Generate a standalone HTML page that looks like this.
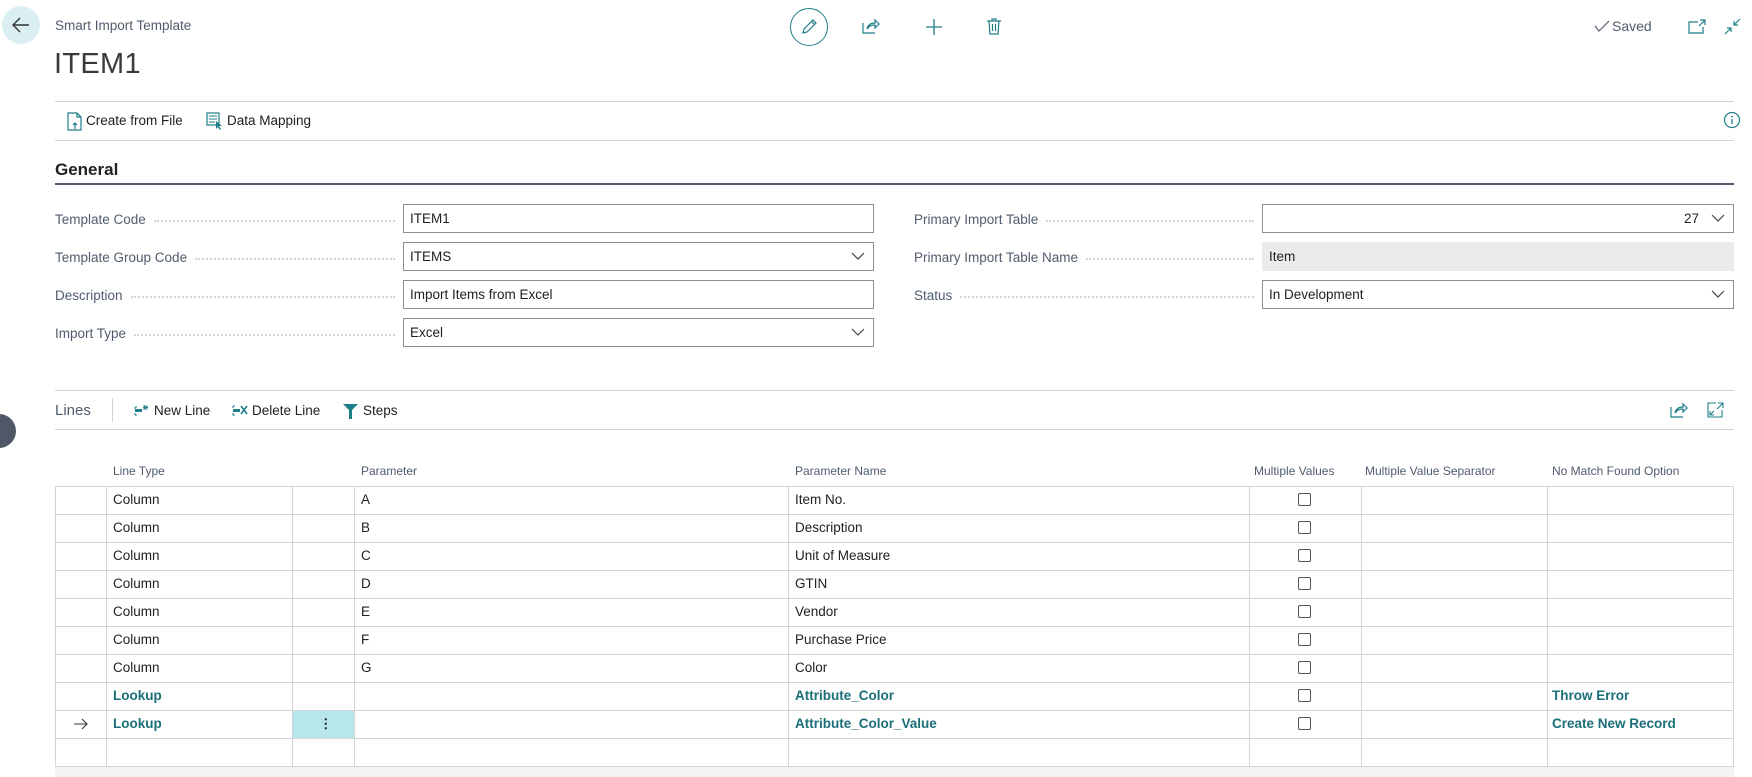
<!DOCTYPE html>
<html><head><meta charset="utf-8"><style>
*{box-sizing:border-box;margin:0;padding:0}
body{width:1752px;height:777px;background:#fff;font-family:"Segoe UI","Liberation Sans",sans-serif;color:#212121;position:relative;overflow:hidden;font-size:14px}
.a{position:absolute;white-space:nowrap}
.hl{position:absolute;height:1px;background:#d4d4d4}
.lbl{position:absolute;display:flex;align-items:center;height:29px;color:#505c6d;font-size:13.5px;padding-top:2px}
.lbl span.d{flex:1;margin-left:8px;margin-right:8px;border-bottom:2px dotted #d6d6d6;height:1px;margin-top:2px}
.box{position:absolute;height:29px;border:1px solid #8a8d94;padding-left:6px;line-height:27px;font-size:13.5px;color:#212121}
.chev{position:absolute;right:8px;top:8px}
.cell{position:absolute;font-size:13.5px;line-height:28px}
.th{position:absolute;font-size:12px;color:#505c6d;top:464px}
.vl{position:absolute;width:1px;background:#d4d4d8;top:486px;height:280px}
.rl{position:absolute;height:1px;background:#d4d4d8;left:55px;width:1679px}
.cb{position:absolute;width:13px;height:13px;border:1px solid #555;border-radius:2px;left:1298px}
.lk{color:#1a6f78;font-weight:bold}
</style></head><body>
<div class="a" style="left:2px;top:6px;width:38px;height:38px;border-radius:50%;background:#dbeef2"></div>
<svg class="a" style="left:10px;top:15px" width="22" height="20" viewBox="0 0 22 20"><path d="M19 10H3M10 3L3 10l7 7" fill="none" stroke="#333" stroke-width="1.4"/></svg>
<div class="a" style="left:55px;top:18px;font-size:13.5px;color:#505c6d">Smart Import Template</div>
<div class="a" style="left:54px;top:48px;font-size:29px;font-weight:300;color:#3a3a3a;letter-spacing:0.3px">ITEM1</div>
<div class="a" style="left:790px;top:8px;width:38px;height:38px;border-radius:50%;border:1.5px solid #1f7e88"></div>
<svg class="a" style="left:800px;top:17px" width="19" height="19" viewBox="0 0 19 19"><path d="M3 16l1-4L13 3l3 3-9 9z M11.5 4.5l3 3" fill="none" stroke="#1f7e88" stroke-width="1.2"/></svg>
<svg class="a" style="left:862px;top:18px" width="18" height="16" viewBox="0 0 18 16"><path d="M1 5v10h12 M5 11c1-4 4-6 8-6V2l4 4-4 4V7c-3 0-6 1-8 4" fill="none" stroke="#1f7e88" stroke-width="1.2"/></svg>
<svg class="a" style="left:925px;top:18px" width="18" height="18" viewBox="0 0 18 18"><path d="M9 1v16M1 9h16" stroke="#1f7e88" stroke-width="1.3"/></svg>
<svg class="a" style="left:986px;top:17px" width="16" height="18" viewBox="0 0 16 18"><path d="M1 4h14M6 4V2h4v2M3 4l1 13h8l1-13M6.5 7v7M9.5 7v7" fill="none" stroke="#1f7e88" stroke-width="1.2"/></svg>
<svg class="a" style="left:1594px;top:20px" width="16" height="12" viewBox="0 0 16 12"><path d="M1 6l4 5L15 1" fill="none" stroke="#505c6d" stroke-width="1.2"/></svg>
<div class="a" style="left:1612px;top:18px;font-size:14px;color:#505c6d">Saved</div>
<svg class="a" style="left:1688px;top:19px" width="18" height="15" viewBox="0 0 18 15"><path d="M10 3H1v11h14V8 M12 1h5v5 M17 1l-6 6" fill="none" stroke="#1f7e88" stroke-width="1.2"/></svg>
<svg class="a" style="left:1724px;top:18px" width="17" height="17" viewBox="0 0 17 17"><path d="M16 1l-6 6M10 3v4h4 M1 16l6-6M3 10h4v4" fill="none" stroke="#1f7e88" stroke-width="1.2"/></svg>
<div class="hl" style="left:55px;top:101px;width:1679px"></div>
<svg class="a" style="left:67px;top:112px" width="16" height="19" viewBox="0 0 16 19"><path d="M10 1H1v17h13V5z M10 1v4h4 M8 17v-6M6 13l2-2 2 2" fill="none" stroke="#1f7e88" stroke-width="1.2"/></svg>
<div class="a" style="left:86px;top:113px;font-size:13.5px">Create from File</div>
<svg class="a" style="left:206px;top:112px" width="18" height="18" viewBox="0 0 18 18"><rect x="1" y="1" width="12" height="12" fill="none" stroke="#1f7e88" stroke-width="1.2"/><path d="M3 4h8M3 7h8M3 10h6" stroke="#1f7e88"/><path d="M10 9l6 5-3 0 2 3-1 1-2-3-2 2z" fill="#1f7e88"/></svg>
<div class="a" style="left:227px;top:113px;font-size:13.5px">Data Mapping</div>
<svg class="a" style="left:1723px;top:111px" width="18" height="18" viewBox="0 0 18 18"><circle cx="9" cy="9" r="7.5" fill="none" stroke="#1f7e88" stroke-width="1.2"/><path d="M9 8v5" stroke="#1f7e88" stroke-width="1.3"/><circle cx="9" cy="5.5" r="0.9" fill="#1f7e88"/></svg>
<div class="hl" style="left:55px;top:140px;width:1679px"></div>
<div class="a" style="left:55px;top:160px;font-size:17px;font-weight:600;color:#212121">General</div>
<div class="a" style="left:55px;top:183px;width:1679px;height:2px;background:#505c6d"></div>
<div class="lbl" style="left:55px;top:204px;width:348px">Template Code<span class="d"></span></div>
<div class="lbl" style="left:55px;top:242px;width:348px">Template Group Code<span class="d"></span></div>
<div class="lbl" style="left:55px;top:280px;width:348px">Description<span class="d"></span></div>
<div class="lbl" style="left:55px;top:318px;width:348px">Import Type<span class="d"></span></div>
<div class="box" style="left:403px;top:204px;width:471px">ITEM1</div>
<div class="box" style="left:403px;top:242px;width:471px">ITEMS<svg class="chev" width="14" height="10" viewBox="0 0 14 10"><path d="M1 2l6 6 6-6" fill="none" stroke="#444" stroke-width="1.2"/></svg></div>
<div class="box" style="left:403px;top:280px;width:471px">Import Items from Excel</div>
<div class="box" style="left:403px;top:318px;width:471px">Excel<svg class="chev" width="14" height="10" viewBox="0 0 14 10"><path d="M1 2l6 6 6-6" fill="none" stroke="#444" stroke-width="1.2"/></svg></div>
<div class="lbl" style="left:914px;top:204px;width:348px">Primary Import Table<span class="d"></span></div>
<div class="lbl" style="left:914px;top:242px;width:348px">Primary Import Table Name<span class="d"></span></div>
<div class="lbl" style="left:914px;top:280px;width:348px">Status<span class="d"></span></div>
<div class="box" style="left:1262px;top:204px;width:472px;text-align:right;padding-right:34px">27<svg class="chev" width="14" height="10" viewBox="0 0 14 10"><path d="M1 2l6 6 6-6" fill="none" stroke="#444" stroke-width="1.2"/></svg></div>
<div class="box" style="left:1262px;top:242px;width:472px;border:none;background:#eaebec;padding-left:7px;line-height:29px">Item</div>
<div class="box" style="left:1262px;top:280px;width:472px">In Development<svg class="chev" width="14" height="10" viewBox="0 0 14 10"><path d="M1 2l6 6 6-6" fill="none" stroke="#444" stroke-width="1.2"/></svg></div>
<div class="hl" style="left:55px;top:390px;width:1679px"></div>
<div class="a" style="left:-18px;top:414px;width:34px;height:34px;border-radius:50%;background:#505766"></div>
<div class="a" style="left:55px;top:402px;font-size:15px;color:#505c6d">Lines</div>
<div class="a" style="left:112px;top:398px;width:1px;height:24px;background:#d4d4d4"></div>
<svg class="a" style="left:134px;top:403px" width="17" height="15" viewBox="0 0 17 15"><path d="M1 4h2M1 4v2M1 10v2h2" stroke="#1f7e88" fill="none"/><rect x="1" y="6" width="7" height="3" fill="#1f7e88"/><path d="M11 2v5M9 4.5h5M9.5 2.5l4 4M13.5 2.5l-4 4" stroke="#1f7e88" stroke-width="0.9"/></svg>
<div class="a" style="left:154px;top:403px;font-size:13.5px">New Line</div>
<svg class="a" style="left:232px;top:404px" width="17" height="13" viewBox="0 0 17 13"><path d="M1 2h2M1 2v2M1 9v2h2" stroke="#1f7e88" fill="none"/><rect x="1" y="5" width="7" height="3" fill="#1f7e88"/><path d="M9 2l6 8M15 2l-6 8" stroke="#1f7e88" stroke-width="1.6"/></svg>
<div class="a" style="left:252px;top:403px;font-size:13.5px">Delete Line</div>
<svg class="a" style="left:343px;top:404px" width="15" height="15" viewBox="0 0 15 15"><path d="M0 0h15L9 6v9H6V6z" fill="#1f7e88"/></svg>
<div class="a" style="left:363px;top:403px;font-size:13.5px">Steps</div>
<svg class="a" style="left:1670px;top:402px" width="18" height="16" viewBox="0 0 18 16"><path d="M1 5v10h12 M5 11c1-4 4-6 8-6V2l4 4-4 4V7c-3 0-6 1-8 4" fill="none" stroke="#1f7e88" stroke-width="1.2"/></svg>
<svg class="a" style="left:1707px;top:402px" width="17" height="16" viewBox="0 0 17 16"><path d="M9 1H1v14h14V8 M11 1h5v5 M16 1l-6 6 M3 13l4-4M3 9v4h4" fill="none" stroke="#1f7e88" stroke-width="1.1"/></svg>
<div class="hl" style="left:55px;top:429px;width:1679px"></div>
<div class="th" style="left:113px">Line Type</div>
<div class="th" style="left:361px">Parameter</div>
<div class="th" style="left:795px">Parameter Name</div>
<div class="th" style="left:1254px">Multiple Values</div>
<div class="th" style="left:1365px">Multiple Value Separator</div>
<div class="th" style="left:1552px">No Match Found Option</div>
<div class="a" style="left:292px;top:710px;width:62px;height:28px;background:#b7e7ec"></div>
<div class="rl" style="top:486px"></div><div class="rl" style="top:514px"></div><div class="rl" style="top:542px"></div><div class="rl" style="top:570px"></div><div class="rl" style="top:598px"></div><div class="rl" style="top:626px"></div><div class="rl" style="top:654px"></div><div class="rl" style="top:682px"></div><div class="rl" style="top:710px"></div><div class="rl" style="top:738px"></div><div class="rl" style="top:766px"></div>
<div class="vl" style="left:55px"></div><div class="vl" style="left:106px"></div><div class="vl" style="left:292px"></div><div class="vl" style="left:354px"></div><div class="vl" style="left:788px"></div><div class="vl" style="left:1249px"></div><div class="vl" style="left:1361px"></div><div class="vl" style="left:1547px"></div><div class="vl" style="left:1733px"></div>
<div class="a" style="left:55px;top:767px;width:1679px;height:10px;background:#f3f3f4"></div>
<div class="cell" style="left:113px;top:486px">Column</div><div class="cell" style="left:361px;top:486px">A</div><div class="cell" style="left:795px;top:486px">Item No.</div>
<div class="cell" style="left:113px;top:514px">Column</div><div class="cell" style="left:361px;top:514px">B</div><div class="cell" style="left:795px;top:514px">Description</div>
<div class="cell" style="left:113px;top:542px">Column</div><div class="cell" style="left:361px;top:542px">C</div><div class="cell" style="left:795px;top:542px">Unit of Measure</div>
<div class="cell" style="left:113px;top:570px">Column</div><div class="cell" style="left:361px;top:570px">D</div><div class="cell" style="left:795px;top:570px">GTIN</div>
<div class="cell" style="left:113px;top:598px">Column</div><div class="cell" style="left:361px;top:598px">E</div><div class="cell" style="left:795px;top:598px">Vendor</div>
<div class="cell" style="left:113px;top:626px">Column</div><div class="cell" style="left:361px;top:626px">F</div><div class="cell" style="left:795px;top:626px">Purchase Price</div>
<div class="cell" style="left:113px;top:654px">Column</div><div class="cell" style="left:361px;top:654px">G</div><div class="cell" style="left:795px;top:654px">Color</div>
<div class="cell lk" style="left:113px;top:682px">Lookup</div><div class="cell lk" style="left:795px;top:682px">Attribute_Color</div><div class="cell lk" style="left:1552px;top:682px">Throw Error</div>
<div class="cell lk" style="left:113px;top:710px">Lookup</div><div class="cell lk" style="left:795px;top:710px">Attribute_Color_Value</div><div class="cell lk" style="left:1552px;top:710px">Create New Record</div>
<div class="cell" style="left:319px;top:710px;font-weight:bold">⋮</div>
<svg class="a" style="left:73px;top:718px" width="16" height="12" viewBox="0 0 16 12"><path d="M1 6h13M9 1l5 5-5 5" fill="none" stroke="#333" stroke-width="1.1"/></svg>
<div class="cb" style="top:493px"></div><div class="cb" style="top:521px"></div><div class="cb" style="top:549px"></div><div class="cb" style="top:577px"></div><div class="cb" style="top:605px"></div><div class="cb" style="top:633px"></div><div class="cb" style="top:661px"></div><div class="cb" style="top:689px"></div><div class="cb" style="top:717px"></div>
</body></html>
